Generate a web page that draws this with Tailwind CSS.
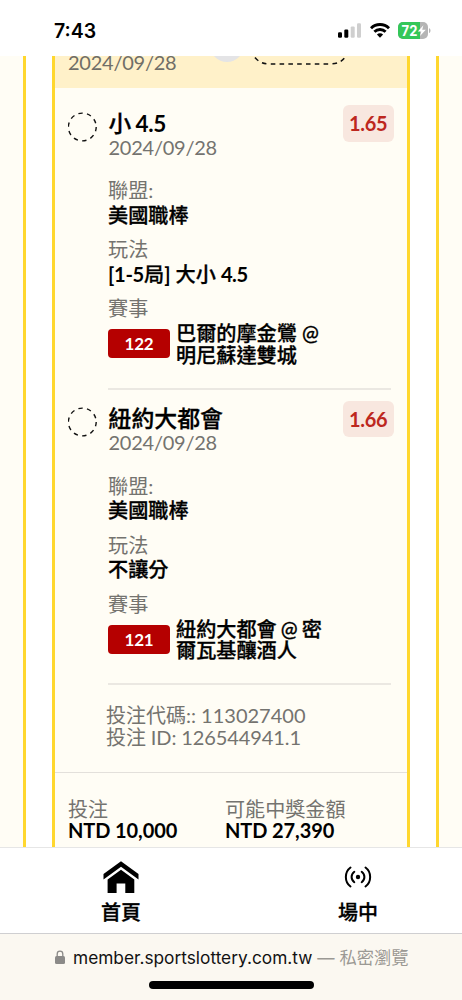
<!DOCTYPE html>
<html lang="zh-Hant">
<head>
<meta charset="utf-8">
<meta name="viewport" content="width=device-width, initial-scale=1">
<title>投注紀錄</title>
<script src="https://cdn.jsdelivr.net/npm/@tailwindcss/browser@4"></script>
</head>
<body class="bg-white">
<div class="flex h-[1000px] w-[462px] flex-col overflow-hidden bg-white font-['Lato','Noto_Sans_CJK_TC',sans-serif] text-[20px] leading-[24px] text-black">

  <!-- Status bar -->
  <header class="flex h-[56px] shrink-0 items-start justify-between pl-[54px] pr-[31px]">
    <div class="pt-[19px] font-['Inter','Liberation_Sans',sans-serif] text-[19.5px] leading-[24px] font-semibold">7:43</div>
    <div class="flex pt-[22px]">
      <svg class="mt-[1px] h-[15px] w-[24px]" viewBox="0 0 24 15">
        <rect x="0" y="9.3" width="4" height="5.4" rx="1.2"/>
        <rect x="6.3" y="6.5" width="4" height="8.2" rx="1.2"/>
        <rect x="12.7" y="3.4" width="4" height="11.3" rx="1.2" fill="#cfcfcf"/>
        <rect x="19" y="0.3" width="4" height="14.4" rx="1.2" fill="#cfcfcf"/>
      </svg>
      <svg class="ml-[8px] mt-[1px] h-[15px] w-[20px]" viewBox="0 0 20 15" fill="none" stroke="#000" stroke-width="2.9">
        <path d="M1 5.2a12.8 12.8 0 0 1 18 0"/>
        <path d="M4.4 8.8a8 8 0 0 1 11.2 0"/>
        <path d="M10 14.7 6.9 11.5a4.4 4.4 0 0 1 6.2 0Z" fill="#000" stroke="none"/>
      </svg>
      <svg class="ml-[8px] h-[17px] w-[33px]" viewBox="0 0 33 17">
        <defs><clipPath id="cell"><rect width="30" height="17" rx="5"/></clipPath></defs>
        <g clip-path="url(#cell)"><rect width="30" height="17" fill="#b5b5b5"/><rect width="22" height="17" fill="#34c759"/></g>
        <path d="M31 6.2c2 .7 2 4 0 4.8Z" fill="#b5b5b5"/>
        <text x="3.6" y="13.5" font-family="Inter" font-size="14" font-weight="700" fill="#fff" textLength="15.8" lengthAdjust="spacingAndGlyphs">72</text>
        <path d="M25.4 3.2 19.8 9.4h3.5l-1.3 4.7 5.8-6.3h-3.6Z" fill="#fff"/>
      </svg>
    </div>
  </header>

  <!-- Carousel of bet slips -->
  <main class="flex h-[791px] shrink-0 justify-between overflow-hidden">
    <div class="w-[26px] border-r-[3px] border-[#ffd72e] bg-[#fffdf5]"></div>

    <article class="w-[358px] overflow-hidden border-x-[3px] border-[#ffd72e] bg-[#fffdf5]">
      <div class="flex h-[32px] items-start overflow-hidden bg-[#fff1c9] pl-[13px] text-[#706e67]">
        <div class="-mt-[6px] w-[142px] tracking-[-0.25px]">2024/09/28</div>
        <div class="-mt-[28px] h-[34px] w-[34px] rounded-full bg-[#e4e4e6]"></div>
        <svg class="ml-[9px] h-[10px] w-[94px]" viewBox="0 0 94 10" fill="none" stroke="#111" stroke-width="1.5" stroke-dasharray="4.6 4.2">
          <path d="M2 1.5Q7 7.9 16 7.9H78Q87 7.9 92 1.5"/>
        </svg>
      </div>

      <section class="h-[295.5px] pl-[13px] pr-[13px] pt-[17px]">
        <div class="flex h-[73px] items-start">
          <svg class="mt-[7px] h-[30px] w-[30px] shrink-0" viewBox="0 0 30 30" fill="none" stroke="#111" stroke-width="1.4"><circle cx="14.3" cy="15" r="13.9" stroke-dasharray="4.4 4.33"/></svg>
          <div class="ml-[10.5px] mt-[6px] grow">
            <h2 class="text-[22.8px] font-medium leading-[25px] [-webkit-text-stroke:0.3px]">小 <span class="-ml-[1.5px] text-[22.5px] font-bold tracking-[-0.4px] [-webkit-text-stroke:0px]">4.5</span></h2>
            <p class="-mt-px tracking-[-0.25px] text-[#74736f]">2024/09/28</p>
          </div>
          <div class="flex h-[36.5px] w-[51.5px] items-center justify-center rounded-[6px] bg-[#f8e7df] font-bold tracking-[-0.3px] text-[#bd271e]">1.65</div>
        </div>
        <dl class="ml-[40px] text-[20.15px] leading-[24.5px]">
          <dt class="text-[#74736f]">聯盟:</dt><dd class="mb-[10px] font-medium [-webkit-text-stroke:0.3px]">美國職棒</dd>
          <dt class="text-[#74736f]">玩法</dt><dd class="mb-[10px] font-medium [-webkit-text-stroke:0.3px]"><span class="font-bold tracking-[-0.3px] [-webkit-text-stroke:0px]">[1-5</span>局<span class="font-bold [-webkit-text-stroke:0px]">]</span> 大小 <span class="font-bold tracking-[-0.5px] [-webkit-text-stroke:0px]">4.5</span></dd>
          <dt class="text-[#74736f]">賽事</dt>
          <dd class="flex items-start">
            <span class="mt-[8.5px] h-[29px] w-[62px] shrink-0 rounded-[4px] bg-[#b50000] text-center text-[17px] leading-[30px] font-bold tracking-[-0.2px] text-white">122</span>
            <span class="ml-[6px] mt-[2.5px] font-medium leading-[21.7px] [-webkit-text-stroke:0.3px]">巴爾的摩金鶯 @<br>明尼蘇達雙城</span>
          </dd>
        </dl>
        <div class="ml-[40px] mr-[3px] mt-[21.5px] h-[2px] bg-[#ebe8e2]"></div>
      </section>

      <section class="h-[295.5px] pl-[13px] pr-[13px] pt-[17px]">
        <div class="flex h-[73px] items-start">
          <svg class="mt-[6.5px] h-[30px] w-[30px] shrink-0" viewBox="0 0 30 30" fill="none" stroke="#111" stroke-width="1.4"><circle cx="14.3" cy="15" r="13.9" stroke-dasharray="4.4 4.33"/></svg>
          <div class="ml-[10.5px] mt-[5px] grow">
            <h2 class="text-[22.9px] font-medium leading-[25px] [-webkit-text-stroke:0.3px]">紐約大都會</h2>
            <p class="-mt-px tracking-[-0.25px] text-[#74736f]">2024/09/28</p>
          </div>
          <div class="flex h-[36.5px] w-[51.5px] items-center justify-center rounded-[6px] bg-[#f8e7df] font-bold tracking-[-0.3px] text-[#bd271e]">1.66</div>
        </div>
        <dl class="ml-[40px] text-[20.15px] leading-[24.5px]">
          <dt class="text-[#74736f]">聯盟:</dt><dd class="mb-[10px] font-medium [-webkit-text-stroke:0.3px]">美國職棒</dd>
          <dt class="text-[#74736f]">玩法</dt><dd class="mb-[10px] font-medium [-webkit-text-stroke:0.3px]">不讓分</dd>
          <dt class="text-[#74736f]">賽事</dt>
          <dd class="flex items-start">
            <span class="mt-[8.5px] h-[29px] w-[62px] shrink-0 rounded-[4px] bg-[#b50000] text-center text-[17px] leading-[30px] font-bold tracking-[-0.2px] text-white">121</span>
            <span class="ml-[6px] mt-[2.5px] font-medium leading-[21.7px] [-webkit-text-stroke:0.3px]">紐約大都會<span class="-ml-px"> @ </span><span class="-ml-px">密</span><br>爾瓦基釀酒人</span>
          </dd>
        </dl>
        <div class="ml-[40px] mr-[3px] mt-[21.5px] h-[2px] bg-[#ebe8e2]"></div>
      </section>

      <div class="h-[94px] border-b border-[#e3e0db] pl-[51px] pt-[26px] leading-[21.5px] text-[#74736f]">
        <p>投注代碼:: 113027400</p>
        <p class="tracking-[-0.1px]">投注 ID: 126544941.1</p>
      </div>
      <div class="flex pl-[13px] pt-[26px] leading-[21.5px]">
        <div class="w-[157px]"><p class="text-[#74736f]">投注</p><p class="-mt-px font-bold tracking-[-0.1px]">NTD 10,000</p></div>
        <div><p class="text-[20.1px] text-[#74736f]">可能中獎金額</p><p class="-mt-px font-bold tracking-[-0.1px]">NTD 27,390</p></div>
      </div>
    </article>

    <div class="w-[26px] border-l-[3px] border-[#ffd72e] bg-[#fffdf5]"></div>
  </main>

  <!-- Tab bar -->
  <nav class="flex h-[86px] shrink-0 border-t-[1.5px] border-[#e6e6e6] bg-white pl-[3px] font-medium [-webkit-text-stroke:0.3px]">
    <a class="flex w-[236px] shrink-0 flex-col items-center pt-[13px]">
      <svg class="h-[32px] w-[36px]" viewBox="0 0 36 32">
        <path d="M18 .3 35.5 13v5.6L18 5.8.5 18.6V13Z"/>
        <path d="M18 8.8 31.3 18.5V32h-9V22.5h-8.7V32h-9V18.5Z"/>
      </svg>
      <span class="mt-[7px]">首頁</span>
    </a>
    <a class="flex w-[238px] shrink-0 flex-col items-center pt-[18px]">
      <svg class="h-[22px] w-[28px]" viewBox="0 0 28 22" fill="none" stroke="#000" stroke-width="2" stroke-linecap="round">
        <circle cx="14" cy="11" r="2.2" fill="#000" stroke="none"/>
        <path d="M6.5 1.5C.3 6 .3 16 6.5 20.5M10.3 5.8C6.7 8.5 6.7 13.5 10.3 16.2M21.5 1.5c6.2 4.5 6.2 14.5 0 19M17.7 5.8c3.6 2.7 3.6 7.7 0 10.4"/>
      </svg>
      <span class="mt-[12px]">場中</span>
    </a>
  </nav>

  <!-- Browser address bar -->
  <footer class="flex h-[67px] shrink-0 flex-col items-center border-t border-[#cfcfd1] bg-[#fbf8f1]">
    <div class="flex h-[47px] w-full items-start pl-[55px] pt-[12px] font-['Inter','Noto_Sans_CJK_TC',sans-serif] text-[17.3px] whitespace-nowrap">
      <svg class="mt-[4px] h-[14px] w-[10px] shrink-0" viewBox="0 0 10 14" fill="#8b8a88"><rect y="6" width="10" height="8" rx="1.5"/><path d="M2.2 6.5V4a2.8 2.8 0 0 1 5.6 0v2.5" fill="none" stroke="#8b8a88" stroke-width="1.3"/></svg>
      <span class="ml-[8px] text-[#111]">member.sportslottery.com.tw</span>
      <span class="ml-[5px] text-[#9b9994]">— 私密瀏覽</span>
    </div>
    <div class="h-[7.5px] w-[165px] rounded-full bg-black"></div>
  </footer>
</div>
</body>
</html>
